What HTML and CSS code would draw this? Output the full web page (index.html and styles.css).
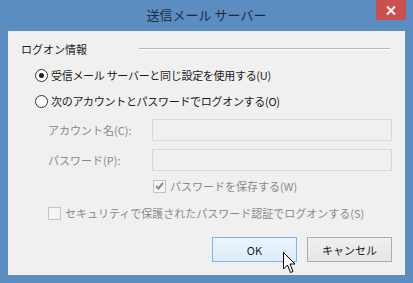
FILE: index.html
```html
<!DOCTYPE html>
<html lang="ja">
<head>
<meta charset="utf-8">
<title>送信メール サーバー</title>
<link rel="stylesheet" href="styles.css">
</head>
<body>
<div class="window">
  <div class="titlebar">
    <span class="title">送信メール サーバー</span>
    <span class="close">
      <svg width="10" height="9" viewBox="0 0 10 9"><path d="M1 0.5 L9 8.5 M9 0.5 L1 8.5" stroke="#fff" stroke-width="2"/></svg>
    </span>
  </div>
  <div class="panel">
    <div class="group-head">
      <span>ログオン情報</span>
      <span class="rule"></span>
    </div>
    <div class="radio-row first">
      <span class="radio checked"></span>
      <span>受信メール サーバーと同じ設定を使用する(U)</span>
    </div>
    <div class="radio-row">
      <span class="radio"></span>
      <span>次のアカウントとパスワードでログオンする(O)</span>
    </div>
    <div class="field-row first">
      <span class="label">アカウント名(C):</span>
      <span class="input"></span>
    </div>
    <div class="field-row">
      <span class="label">パスワード(P):</span>
      <span class="input"></span>
    </div>
    <div class="check-row save">
      <span class="check checked">
        <svg width="9" height="8" viewBox="0 0 9 8"><path d="M1 4 L3.5 6.5 L8 1" stroke="#8a8a8a" stroke-width="2" fill="none"/></svg>
      </span>
      <span>パスワードを保存する(W)</span>
    </div>
    <div class="check-row spa">
      <span class="check"></span>
      <span>セキュリティで保護されたパスワード認証でログオンする(S)</span>
    </div>
    <div class="buttons">
      <span class="btn default">OK</span>
      <span class="btn">キャンセル</span>
    </div>
  </div>
  <svg class="cursor" width="14" height="22" viewBox="0 0 14 22"><path d="M0.5 0.5 L0.5 17 L4.5 13 L7.5 20.5 L10 19.5 L7 12 L12 12 Z" fill="#fff" stroke="#000" stroke-width="1"/></svg>
</div>
</body>
</html>
```

FILE: styles.css
```css
html, body {
  margin: 0;
  padding: 0;
}
body {
  font-family: "Noto Sans CJK JP", "Noto Sans", sans-serif;
  font-size: 11px;
  color: #1a1a1a;
}
.window {
  position: relative;
  width: 413px;
  height: 283px;
  box-sizing: border-box;
  background: #5b8dc0;
  padding: 0 8px 8px 8px;
  display: flex;
  flex-direction: column;
}
.titlebar {
  height: 31px;
  display: flex;
  align-items: center;
  justify-content: center;
}
.title {
  font-size: 13px;
  color: #1c2c42;
  margin-top: -2px;
}
.close {
  position: absolute;
  top: 0;
  right: 7px;
  width: 30px;
  height: 20px;
  background: #c9504f;
  display: flex;
  align-items: center;
  justify-content: center;
}
.panel {
  flex: 1;
  background: #f0f0f0;
  padding: 0 13px 13px 13px;
  display: flex;
  flex-direction: column;
}
.group-head {
  margin-top: 10px;
  height: 16px;
  line-height: 16px;
  display: flex;
  align-items: center;
  gap: 8px;
  margin-right: 2px;
}
.rule {
  flex: 1;
  height: 1px;
  background: #b8b8b8;
  border-bottom: 1px solid #ffffff;
  margin-left: 44px;
}
.radio-row {
  margin-top: 10px;
  margin-left: 14px;
  height: 16px;
  line-height: 16px;
  display: flex;
  align-items: center;
  gap: 3px;
  letter-spacing: -0.3px;
}
.radio-row.first {
  margin-top: 10px;
}
.radio {
  width: 11px;
  height: 11px;
  border: 1px solid #333;
  border-radius: 50%;
  background: #fff;
  position: relative;
  box-sizing: content-box;
}
.radio.checked::after {
  content: "";
  position: absolute;
  left: 3px;
  top: 3px;
  width: 5px;
  height: 5px;
  border-radius: 50%;
  background: #222;
}
.field-row {
  margin-top: 8px;
  margin-left: 27px;
  display: flex;
  align-items: center;
  height: 22px;
  color: #8a8a8a;
}
.field-row.first {
  margin-top: 10px;
}
.label {
  width: 104px;
}
.input {
  width: 238px;
  height: 20px;
  border: 1px solid #d9d9d9;
  background: #f0f0f0;
}
.check-row {
  height: 16px;
  line-height: 16px;
  display: flex;
  align-items: center;
  gap: 4px;
  color: #8a8a8a;
}
.check-row.save {
  margin-top: 7px;
  margin-left: 132px;
}
.check-row.spa {
  margin-top: 11px;
  margin-left: 27px;
}
.check {
  width: 11px;
  height: 11px;
  border: 1px solid #c4c4c4;
  background: #f4f4f4;
  display: flex;
  align-items: center;
  justify-content: center;
}
.buttons {
  margin-top: 16px;
  display: flex;
  justify-content: flex-end;
  gap: 10px;
}
.btn {
  width: 83px;
  height: 23px;
  border: 1px solid #acacac;
  background: linear-gradient(#f0f0f0, #e5e5e5);
  display: flex;
  align-items: center;
  justify-content: center;
  color: #1a1a1a;
}
.btn.default {
  border-color: #7eb4ea;
  background: linear-gradient(#ecf4fc, #dcecfc);
}
.cursor {
  position: absolute;
  left: 283px;
  top: 252px;
}
```
